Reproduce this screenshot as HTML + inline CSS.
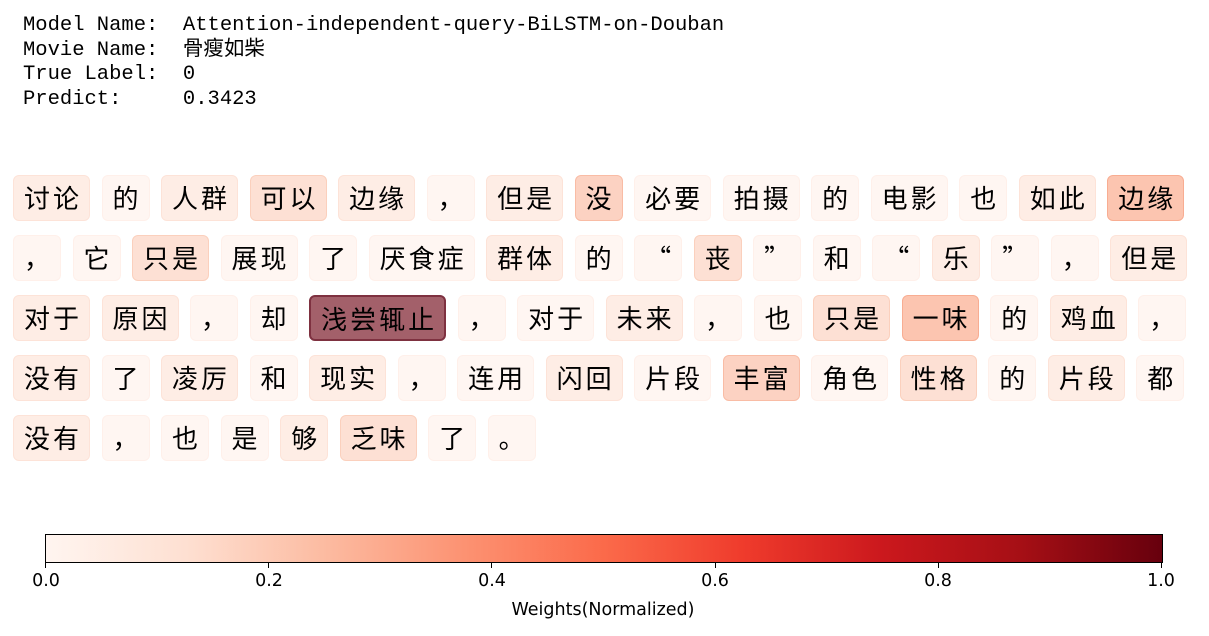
<!DOCTYPE html>
<html><head><meta charset="utf-8"><style>
body{margin:0;width:1209px;height:636px;background:#fff;position:relative;overflow:hidden;font-family:"Liberation Sans","Noto Sans CJK SC",sans-serif}
.hdr{position:absolute;left:23px;top:14px;font-family:"Liberation Mono","Noto Sans CJK SC",monospace;font-size:20.5px;line-height:24.5px;color:#000;white-space:pre}
.row{position:absolute;left:13px;display:flex;gap:11.5px;height:46px}
.b{box-sizing:border-box;height:46px;line-height:44px;padding:0 7px 0 10px;letter-spacing:3px;font-family:"Noto Sans CJK SC","WenQuanYi Zen Hei",sans-serif;font-size:26px;border-radius:6px;border:1px solid rgba(0,0,0,0);color:#000;white-space:nowrap;text-align:center}
.a{background:#fff6f2;border-color:#fff0ea}
.c{background:#feede5;border-color:#fde3d8}
.d{background:#fde0d4;border-color:#fbd0bd}
.e{background:#fcd2c2;border-color:#f9bca5}
.f{background:#fcc5b0;border-color:#f8ad92}
.x{background:#a3606a;border:2px solid #7e3140}
.bar{position:absolute;left:45px;top:534px;width:1116px;height:27px;border:1px solid #000;background:linear-gradient(to right,#fff5f0,#fee0d2 12.5%,#fcbba1 25%,#fc9272 37.5%,#fb6a4a 50%,#ef3b2c 62.5%,#cb181d 75%,#a50f15 87.5%,#67000d)}
.t{position:absolute;top:563px;width:1px;height:5px;background:#000}
.l{position:absolute;top:571px;font-family:"DejaVu Sans",sans-serif;font-size:17.5px;transform:translateX(-50%)}
</style></head><body>
<div class="hdr">Model Name:  Attention-independent-query-BiLSTM-on-Douban
Movie Name:  骨瘦如柴
True Label:  0
Predict:     0.3423</div>

<div class="row" style="top:175px">
<span class="b c">讨论</span><span class="b a">的</span><span class="b c">人群</span><span class="b d">可以</span><span class="b c">边缘</span><span class="b a">，</span><span class="b c">但是</span><span class="b e">没</span><span class="b a">必要</span><span class="b a">拍摄</span><span class="b a">的</span><span class="b a">电影</span><span class="b a">也</span><span class="b c">如此</span><span class="b f">边缘</span>
</div>
<div class="row" style="top:235px">
<span class="b a">，</span><span class="b a">它</span><span class="b d">只是</span><span class="b a">展现</span><span class="b a">了</span><span class="b a">厌食症</span><span class="b c">群体</span><span class="b a">的</span><span class="b a">“</span><span class="b d">丧</span><span class="b a">”</span><span class="b a">和</span><span class="b a">“</span><span class="b c">乐</span><span class="b a">”</span><span class="b a">，</span><span class="b c">但是</span>
</div>
<div class="row" style="top:295px">
<span class="b c">对于</span><span class="b c">原因</span><span class="b a">，</span><span class="b a">却</span><span class="b x">浅尝辄止</span><span class="b a">，</span><span class="b a">对于</span><span class="b c">未来</span><span class="b a">，</span><span class="b a">也</span><span class="b d">只是</span><span class="b f">一味</span><span class="b a">的</span><span class="b c">鸡血</span><span class="b a">，</span>
</div>
<div class="row" style="top:355px">
<span class="b c">没有</span><span class="b a">了</span><span class="b c">凌厉</span><span class="b a">和</span><span class="b c">现实</span><span class="b a">，</span><span class="b a">连用</span><span class="b c">闪回</span><span class="b a">片段</span><span class="b e">丰富</span><span class="b a">角色</span><span class="b d">性格</span><span class="b a">的</span><span class="b c">片段</span><span class="b a">都</span>
</div>
<div class="row" style="top:415px">
<span class="b c">没有</span><span class="b a">，</span><span class="b a">也</span><span class="b a">是</span><span class="b c">够</span><span class="b d">乏味</span><span class="b a">了</span><span class="b a">。</span>
</div>

<div class="bar"></div>
<div class="t" style="left:45px"></div><div class="t" style="left:268px"></div><div class="t" style="left:491px"></div><div class="t" style="left:715px"></div><div class="t" style="left:938px"></div><div class="t" style="left:1161px"></div>
<div class="l" style="left:46px">0.0</div><div class="l" style="left:269px">0.2</div><div class="l" style="left:492px">0.4</div><div class="l" style="left:715px">0.6</div><div class="l" style="left:938px">0.8</div><div class="l" style="left:1161px">1.0</div>
<div class="l" style="left:603px;top:600px">Weights(Normalized)</div>
</body></html>
